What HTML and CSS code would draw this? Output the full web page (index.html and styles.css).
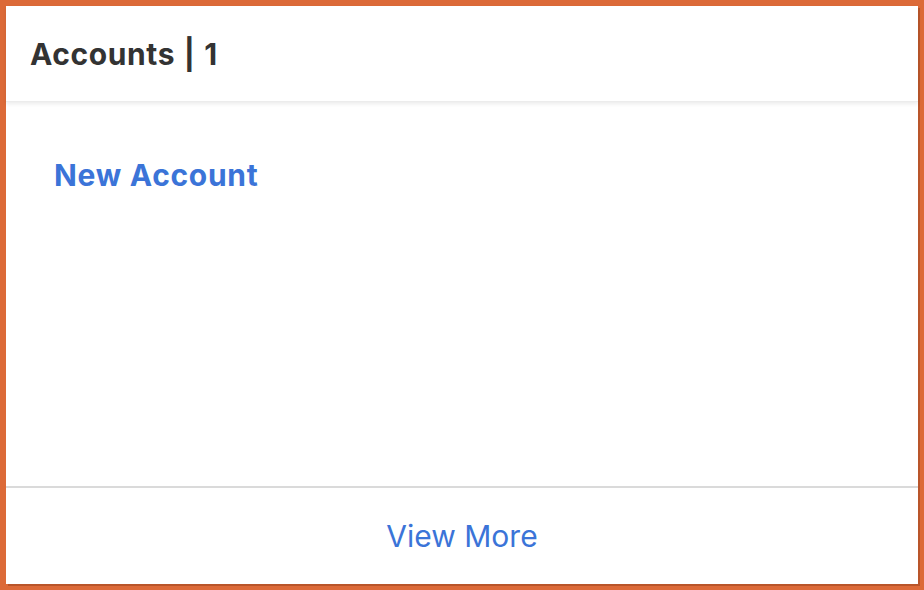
FILE: index.html
```html
<!DOCTYPE html>
<html>
<head>
<meta charset="utf-8">
<link rel="stylesheet" href="styles.css">
</head>
<body>
<div class="card">
  <div class="card-header">
    <h2 class="card-title">Accounts | 1</h2>
  </div>
  <div class="card-body">
    <a class="new-link" href="#">New Account</a>
  </div>
  <div class="card-footer">
    <a class="more-link" href="#">View More</a>
  </div>
</div>
</body>
</html>
```
FILE: styles.css
```css
html, body {
  margin: 0;
  padding: 0;
}
body {
  background: #dc6a38;
  width: 924px;
  height: 590px;
  padding: 6px;
  box-sizing: border-box;
  font-family: Inter, "Liberation Sans", sans-serif;
}
.card {
  width: 912px;
  height: 578px;
  background: #ffffff;
  box-shadow: 2px 2px 0 #b9552a;
  display: flex;
  flex-direction: column;
}
.card-header {
  height: 95px;
  display: flex;
  align-items: center;
  padding: 0 24px;
  box-shadow: 0 2px 4px rgba(0,0,0,0.08);
  border-bottom: 1px solid #ececec;
  position: relative;
  z-index: 1;
}
.card-title {
  margin: 0;
  font-size: 30px;
  font-weight: 700;
  color: #333333;
  letter-spacing: 0.6px;
  word-spacing: 1px;
}
.card-body {
  flex: 1;
  padding: 55px 48px 0;
}
.new-link {
  font-size: 30px;
  font-weight: 700;
  color: #3b74d8;
  text-decoration: none;
  letter-spacing: 0.7px;
}
.card-footer {
  border-top: 2px solid #dadada;
  height: 96px;
  display: flex;
  align-items: center;
  justify-content: center;
}
.more-link {
  font-size: 30px;
  font-weight: 400;
  color: #3b74d8;
  text-decoration: none;
}
```
